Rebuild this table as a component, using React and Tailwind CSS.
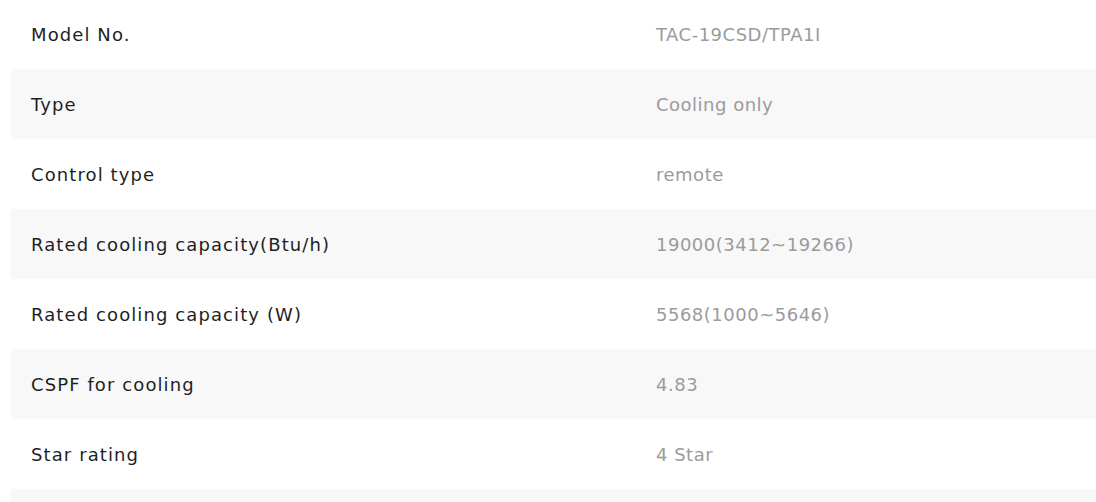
const specs = [
  ["Model No.", "TAC-19CSD/TPA1I"],
  ["Type", "Cooling only"],
  ["Control type", "remote"],
  ["Rated cooling capacity(Btu/h)", "19000(3412~19266)"],
  ["Rated cooling capacity (W)", "5568(1000~5646)"],
  ["CSPF for cooling", "4.83"],
  ["Star rating", "4 Star"],
  ["", ""],
];

export default function App() {
  return (
    <div className="h-[502px] overflow-hidden bg-white pl-[11px] font-['DejaVu_Sans',sans-serif] text-[18px]">
      <div className="-mt-px">
        {specs.map(([label, value], i) => (
          <div
            key={i}
            className={`flex h-[70px] items-center ${i % 2 === 1 ? "bg-[#f8f8f8]" : "bg-white"}`}
          >
            <div className="w-[625px] pl-5 tracking-[1.1px] text-[#1f1f1f]">{label}</div>
            <div className="pl-5 tracking-[0.5px] text-[#9b9b9b]">{value}</div>
          </div>
        ))}
      </div>
    </div>
  );
}
